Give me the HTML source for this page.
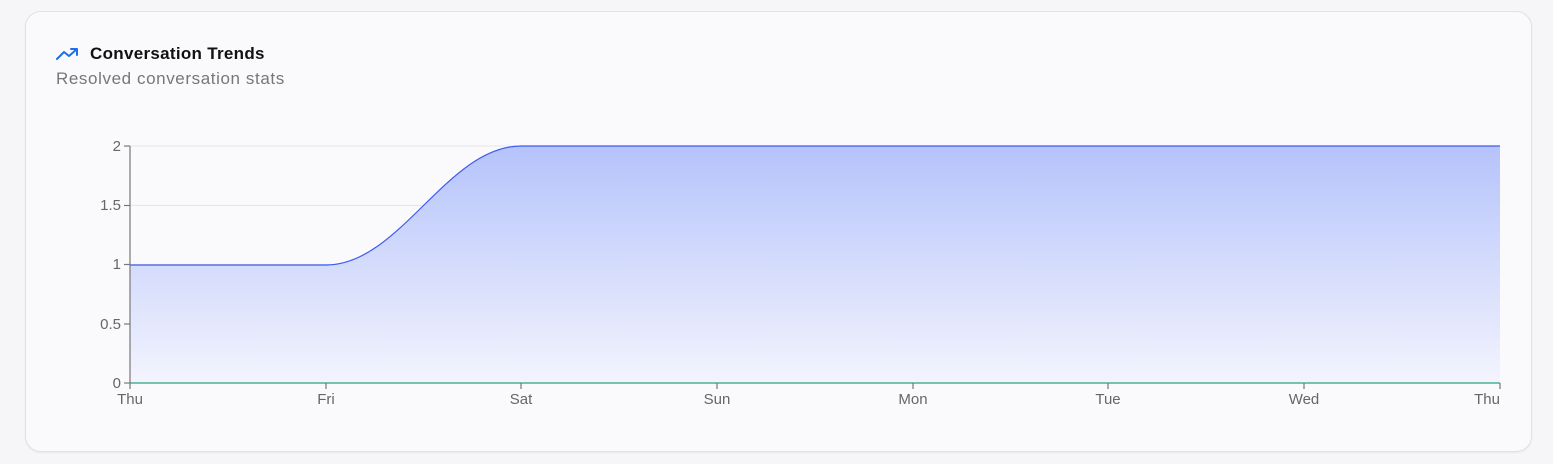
<!DOCTYPE html>
<html><head><style>
body{margin:0;width:1553px;height:464px;background:#f6f6f8;font-family:"Liberation Sans",sans-serif;position:relative;overflow:hidden}
.card{position:absolute;left:25px;top:11px;width:1505px;height:439px;border:1px solid #e2e2e6;border-radius:16px;background:#fafafc;box-shadow:0 1px 2px rgba(0,0,0,.06)}
.t{position:absolute;left:90px;top:44px;font-size:17px;letter-spacing:0.3px;font-weight:bold;color:#111}
.s{position:absolute;left:56px;top:69px;font-size:17px;letter-spacing:0.6px;color:#777}
</style></head><body>
<div class="card"></div>
<svg style="position:absolute;left:56px;top:46px" width="24" height="16" viewBox="0 0 24 16"><path d="M1 13 L8 6 L13 10 L21 3 M15 3 H21 V9" fill="none" stroke="#1d6fe8" stroke-width="2" stroke-linecap="round" stroke-linejoin="round"/></svg>
<div class="t">Conversation Trends</div>
<div class="s">Resolved conversation stats</div>
<svg style="position:absolute;left:0;top:0" width="1553" height="464" font-family="Liberation Sans, sans-serif" font-size="15" fill="#666">
<defs><linearGradient id="g" x1="0" y1="0" x2="0" y2="1"><stop offset="0" stop-color="#b5c3fb"/><stop offset="1" stop-color="#f3f4fd"/></linearGradient></defs>
<g stroke="#e6e6ea" stroke-width="1"><line x1="130" y1="146" x2="1500" y2="146"/><line x1="130" y1="205.5" x2="1500" y2="205.5"/><line x1="130" y1="264.5" x2="1500" y2="264.5"/><line x1="130" y1="324" x2="1500" y2="324"/></g>
<path d="M130 265 H326 C400 265 447 146 521 146 H1500 V383 H130 Z" fill="url(#g)"/>
<path d="M130 265 H326 C400 265 447 146 521 146 H1500" fill="none" stroke="#3f5bf0" stroke-width="1.2"/>
<line x1="130" y1="383" x2="1500" y2="383" stroke="#2aa57a" stroke-width="1.2"/>
<g stroke="#777" stroke-width="1.2"><line x1="130" y1="146" x2="130" y2="389"/>
<line x1="124" y1="146" x2="130" y2="146"/><line x1="124" y1="205.5" x2="130" y2="205.5"/><line x1="124" y1="264.5" x2="130" y2="264.5"/><line x1="124" y1="324" x2="130" y2="324"/><line x1="124" y1="383" x2="130" y2="383"/>
<line x1="326" y1="383" x2="326" y2="389"/><line x1="521" y1="383" x2="521" y2="389"/><line x1="717" y1="383" x2="717" y2="389"/><line x1="913" y1="383" x2="913" y2="389"/><line x1="1108" y1="383" x2="1108" y2="389"/><line x1="1304" y1="383" x2="1304" y2="389"/><line x1="1500" y1="383" x2="1500" y2="389"/></g>
<g text-anchor="end"><text x="121" y="151">2</text><text x="121" y="210">1.5</text><text x="121" y="269">1</text><text x="121" y="329">0.5</text><text x="121" y="388">0</text></g>
<g text-anchor="middle"><text x="130" y="404">Thu</text><text x="326" y="404">Fri</text><text x="521" y="404">Sat</text><text x="717" y="404">Sun</text><text x="913" y="404">Mon</text><text x="1108" y="404">Tue</text><text x="1304" y="404">Wed</text><text x="1487" y="404">Thu</text></g>
</svg>
</body></html>
